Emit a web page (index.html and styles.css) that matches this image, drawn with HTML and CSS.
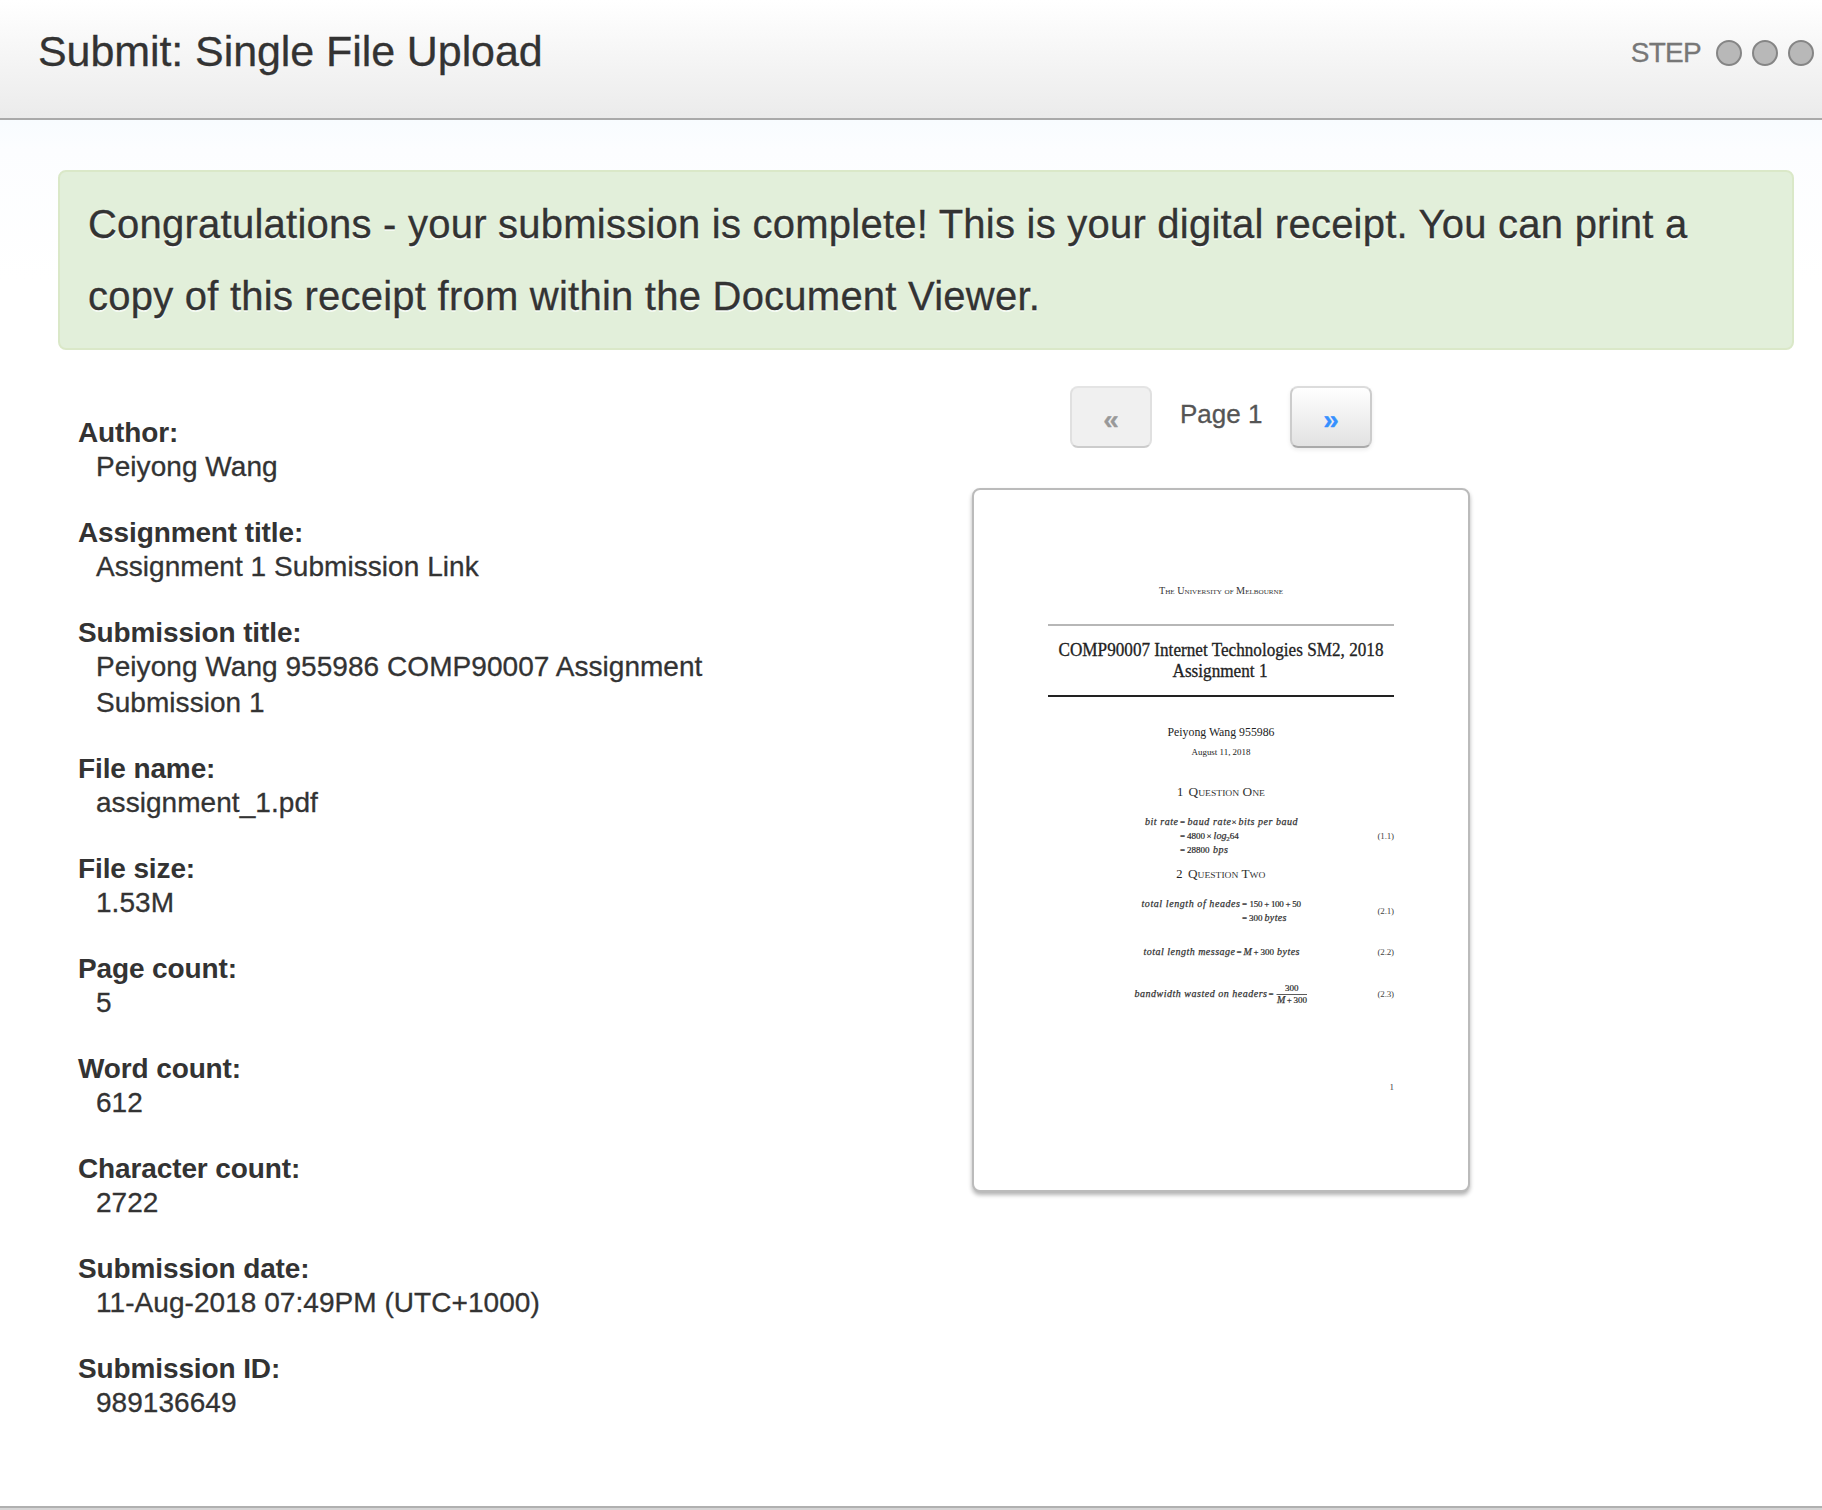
FILE: index.html
```html
<!DOCTYPE html>
<html lang="en">
<head>
<meta charset="utf-8">
<title>Submit: Single File Upload</title>
<link rel="stylesheet" href="styles.css">
</head>
<body>
<header class="header">
  <h1 class="title">Submit: Single File Upload</h1>
  <div class="steps"><span class="steps-label">STEP</span><i class="dot"></i><i class="dot"></i><i class="dot"></i></div>
</header>
<main class="content">
  <p class="notice">Congratulations - your submission is complete! This is your digital receipt. You can print a<br>copy of this receipt from within the Document Viewer.</p>
  <div class="columns">
    <dl class="details">
      <dt>Author:</dt><dd>Peiyong Wang</dd>
      <dt>Assignment title:</dt><dd>Assignment 1 Submission Link</dd>
      <dt>Submission title:</dt><dd>Peiyong Wang 955986 COMP90007 Assignment<br>Submission 1</dd>
      <dt>File name:</dt><dd>assignment_1.pdf</dd>
      <dt>File size:</dt><dd>1.53M</dd>
      <dt>Page count:</dt><dd>5</dd>
      <dt>Word count:</dt><dd>612</dd>
      <dt>Character count:</dt><dd>2722</dd>
      <dt>Submission date:</dt><dd>11-Aug-2018 07:49PM (UTC+1000)</dd>
      <dt>Submission ID:</dt><dd>989136649</dd>
    </dl>
    <section class="preview">
      <nav class="pager">
        <button class="btn btn-off" disabled>«</button>
        <span class="page-no">Page 1</span>
        <button class="btn">»</button>
      </nav>
      <div class="sheet">
        <svg class="page" viewBox="974 490 494 700">
          <text class="caps" x="1159" y="594" font-size="10" textLength="124" lengthAdjust="spacingAndGlyphs">The University of Melbourne</text>
          <rect x="1048" y="624.3" width="346" height="1.4" fill="#999"/>
          <g class="heading">
            <text x="1058.5" y="656" textLength="325" lengthAdjust="spacingAndGlyphs">COMP90007 Internet Technologies SM2, 2018</text>
            <text x="1172.5" y="677" textLength="95" lengthAdjust="spacingAndGlyphs">Assignment 1</text>
          </g>
          <rect x="1048" y="695" width="346" height="2" fill="#222"/>
          <text x="1167.5" y="736" font-size="12" textLength="107" lengthAdjust="spacingAndGlyphs">Peiyong Wang 955986</text>
          <text x="1191.5" y="755" font-size="9" textLength="59" lengthAdjust="spacingAndGlyphs">August 11, 2018</text>
          <g font-size="12.5">
            <text x="1177" y="796">1</text>
            <text class="caps" x="1188.5" y="796" textLength="76.5" lengthAdjust="spacingAndGlyphs">Question One</text>
            <text x="1176.3" y="878">2</text>
            <text class="caps" x="1188" y="878" textLength="77.5" lengthAdjust="spacingAndGlyphs">Question Two</text>
          </g>
          <g class="math">
            <text x="1145" y="825" textLength="33">bit rate</text>
            <text x="1187.5" y="825" textLength="43.5">baud rate</text>
            <text x="1238.5" y="825" textLength="59">bits per baud</text>
            <text x="1213.5" y="839" textLength="13">log</text>
            <text x="1213" y="853" textLength="15">bps</text>
            <text x="1141.5" y="907" textLength="98.5">total length of heades</text>
            <text x="1264.5" y="921" textLength="22">bytes</text>
            <text x="1143.5" y="955" textLength="91.5">total length message</text>
            <text x="1243.5" y="955">M</text>
            <text x="1277" y="955" textLength="22.5">bytes</text>
            <text x="1134.5" y="997" textLength="132.5">bandwidth wasted on headers</text>
            <text x="1277" y="1003.3">M</text>
          </g>
          <g class="num">
            <text x="1180" y="825">=</text><text x="1231.5" y="825">×</text>
            <text x="1180" y="839">=</text><text x="1187" y="839">4800</text><text x="1206.5" y="839">×</text>
            <text x="1226.2" y="841" font-size="7">2</text><text x="1229.7" y="839">64</text>
            <text x="1180" y="853">=</text><text x="1187" y="853">28800</text>
            <text x="1242" y="907">=</text><text x="1249.5" y="907" textLength="51.5">150 + 100 + 50</text>
            <text x="1242" y="921">=</text><text x="1249" y="921">300</text>
            <text x="1236.5" y="955">=</text><text x="1253.5" y="955">+</text><text x="1260.5" y="955">300</text>
            <text x="1268.5" y="997">=</text>
            <text x="1285" y="990.7">300</text><text x="1286.8" y="1003.3">+</text><text x="1293.5" y="1003.3">300</text>
          </g>
          <rect x="1276.5" y="994" width="30.5" height="0.8" fill="#333"/>
          <g class="ref">
            <text x="1377.5" y="839" textLength="16.5">(1.1)</text>
            <text x="1377.5" y="914.3" textLength="16.5">(2.1)</text>
            <text x="1377.5" y="955" textLength="16.5">(2.2)</text>
            <text x="1377.5" y="997" textLength="16.5">(2.3)</text>
            <text x="1389.5" y="1090.3">1</text>
          </g>
        </svg>
      </div>
    </section>
  </div>
</main>
</body>
</html>
```
FILE: styles.css
```css
* { box-sizing: border-box; }
body {
  margin: 0;
  height: 1510px;
  display: flex;
  flex-direction: column;
  overflow: hidden;
  background: #fff;
  color: #333;
  font: 28px/36px "Liberation Sans", Arial, sans-serif;
  -webkit-text-stroke: 0.3px;
}
.header {
  flex: none;
  height: 120px;
  padding: 0 8px 0 38px;
  display: flex;
  justify-content: space-between;
  align-items: flex-start;
  background: linear-gradient(#fff, #ebebeb);
  border-bottom: 2px solid #aaa;
}
.title { margin: 0; font-size: 43px; font-weight: 400; line-height: 102px; letter-spacing: -0.08px; }
.steps { height: 106px; display: flex; align-items: center; gap: 10px; }
.steps-label { margin-right: 5px; color: #777; letter-spacing: -0.7px; }
.dot {
  width: 26px;
  height: 26px;
  border: 2px solid #858585;
  border-radius: 50%;
  background: #b8b8b8;
}
.content {
  flex: 1;
  padding: 50px 28px 0 58px;
  background: linear-gradient(#f8fcff, #fcfdff 30px, #fff 160px);
  border-bottom: 2px solid #d5d5d5;
  box-shadow: inset 0 -2px #b0b0b0;
}
.notice {
  margin: 0;
  height: 180px;
  padding: 16px 0 16px 28px;
  border: 2px solid #dae8c8;
  border-radius: 8px;
  background: #e2efda;
  font-size: 40px;
  line-height: 72px;
  letter-spacing: 0.235px;
  white-space: nowrap;
  text-shadow: 0 2px 0 rgba(255, 255, 255, .7);
}
.columns { display: flex; }
.details { width: 914px; margin: 0; padding: 67px 0 0 20px; }
.details dt { font-weight: 700; line-height: 32px; letter-spacing: -0.12px; -webkit-text-stroke: 0; }
.details dd { margin: 0 0 32px 18px; letter-spacing: 0.05px; }
.preview { width: 498px; padding-top: 36px; }
.pager { display: flex; justify-content: center; gap: 28px; }
.page-no { width: 82px; color: #555; font-size: 26px; line-height: 57px; white-space: nowrap; text-align: center; }
.btn {
  width: 82px;
  height: 62px;
  padding: 5px 0 0;
  border: 2px solid;
  border-color: #dcdcdc #ccc #aaa;
  border-radius: 8px;
  background: linear-gradient(#fff, #e2e2e2);
  box-shadow: 0 2px 4px rgba(0, 0, 0, .08);
  color: #3590ff;
  font: 700 28px/51px "Liberation Sans", Arial, sans-serif;
}
.btn-off {
  border-color: #e4e4e4 #e0e0e0 #ccc;
  background: #f0f0f0;
  box-shadow: none;
  color: #999;
}
.sheet {
  height: 704px;
  margin-top: 40px;
  border: 2px solid #bbb;
  border-radius: 8px;
  background: #fff;
  box-shadow: 0 3px 4px rgba(0, 0, 0, .3);
}
.page {
  display: block;
  width: 494px;
  height: 700px;
  fill: #222;
  font-family: "Liberation Serif", "Times New Roman", serif;
  -webkit-text-stroke: 0;
}
.page text { white-space: pre; }
.caps { font-variant: small-caps; fill: #333; }
.heading { font-size: 18px; stroke: #222; stroke-width: .3px; }
.math { font-size: 10px; font-style: italic; fill: #333; stroke: #333; stroke-width: .25px; }
.num { font-size: 9px; stroke: #333; stroke-width: .2px; }
.ref { font-size: 9px; fill: #444; }
```
